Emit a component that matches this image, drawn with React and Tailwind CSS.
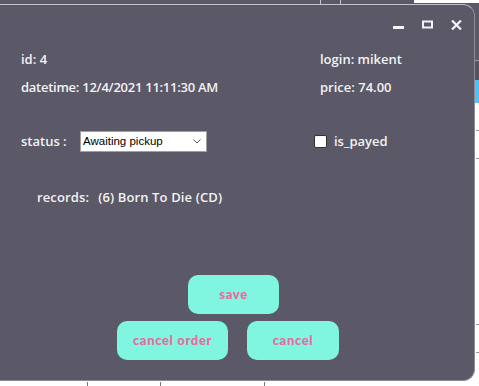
import React from 'react'

function TitleIcons() {
    return (
        <div className="flex items-center justify-end h-[40px] pr-[12px] gap-[18px]">
            <svg width="11" height="10" viewBox="0 0 11 10" className="mt-[2px]">
                <rect x="0" y="5" width="11" height="3" fill="#f4f4f6" />
            </svg>
            <svg width="11" height="10" viewBox="0 0 11 10">
                <rect x="1" y="1.5" width="9" height="6" fill="none" stroke="#f4f4f6" strokeWidth="2" />
            </svg>
            <svg width="11" height="10" viewBox="0 0 11 10">
                <path d="M1 0.5 L10 9.5 M10 0.5 L1 9.5" stroke="#f4f4f6" strokeWidth="2.2" />
            </svg>
        </div>
    )
}

function MintButton({ label, width }) {
    return (
        <button
            className={`${width} h-[39px] rounded-[10px] bg-[#80f5e0] text-[#ec6a9f] text-[13px] font-black tracking-[0.05em]`}
            style={{ fontFamily: 'Lato, "DejaVu Sans", sans-serif' }}
        >
            {label}
        </button>
    )
}

export default function App() {
    return (
        <div className="relative w-[479px] h-[386px] overflow-hidden bg-white">
            {/* parent window behind the dialog */}
            <div className="absolute left-0 top-0 w-[479px] h-[62px] bg-[#5b5867]" />
            <div className="absolute left-[414px] top-0 w-[65px] h-[3px] bg-white" />
            <div className="absolute left-[320px] top-0 w-px h-[5px] bg-[#c8c7cf]" />
            <div className="absolute left-[340px] top-0 w-px h-[5px] bg-[#c8c7cf]" />
            <div className="absolute left-[475px] top-[60px] w-[4px] h-px bg-[#9a98a4]" />
            <div className="absolute left-[475px] top-[62px] w-[4px] h-[18px] bg-[#55525f]" />
            <div className="absolute left-[475px] top-[80px] w-[4px] h-[23px] bg-[#4fc3f7]" />
            <div className="absolute left-[476px] top-[130px] w-[3px] h-px bg-[#9a9a9a]" />
            <div className="absolute left-[476px] top-[158px] w-[3px] h-px bg-[#9a9a9a]" />
            <div className="absolute left-[476px] top-[324px] w-[3px] h-px bg-[#9a9a9a]" />
            <div className="absolute left-[476px] top-[352px] w-[3px] h-px bg-[#9a9a9a]" />
            <div className="absolute left-[87px] top-[382px] w-px h-[4px] bg-[#777]" />
            <div className="absolute left-[160px] top-[382px] w-px h-[4px] bg-[#777]" />
            <div className="absolute left-[264px] top-[382px] w-px h-[4px] bg-[#777]" />

            {/* dialog */}
            <div
                className="absolute left-0 top-[4px] w-[475px] h-[377px] bg-[#5b5867] rounded-tr-[12px] rounded-br-[12px] border-t border-r border-b border-t-[#c4c3cb] border-r-[#8d8b96] border-b-[#8d8b96] text-[#f2f2f4] flex flex-col"
                style={{ fontFamily: '"Open Sans", "Noto Sans", sans-serif' }}
            >
                <TitleIcons />

                <div className="flex pl-[21px] text-[13px] font-semibold leading-[28px]">
                    <div className="w-[299px] flex flex-col">
                        <span>id: 4</span>
                        <span className="tracking-[-0.02em]">datetime: 12/4/2021 11:11:30 AM</span>
                    </div>
                    <div className="flex flex-col">
                        <span>login: mikent</span>
                        <span>price: 74.00</span>
                    </div>
                </div>

                <div className="flex items-center mt-[30px] pl-[21px] text-[13px] font-semibold h-[21px]">
                    <span className="w-[59px]">status :</span>
                    <div
                        className="w-[127px] h-[21px] bg-white border border-[#a0a0a0] flex items-center justify-between pl-[2px] pr-[5px] text-black text-[11.5px] font-normal"
                        style={{ fontFamily: '"Liberation Sans", Arial, sans-serif' }}
                    >
                        <span>Awaiting pickup</span>
                        <svg width="8" height="5" viewBox="0 0 8 5">
                            <path d="M0.5 0.5 L4 4 L7.5 0.5" fill="none" stroke="#555" strokeWidth="1" />
                        </svg>
                    </div>
                    <div className="ml-[107px] flex items-center gap-[7px]">
                        <div className="w-[13px] h-[13px] bg-white border border-[#333] rounded-[2px]" />
                        <span>is_payed</span>
                    </div>
                </div>

                <div className="mt-[35px] pl-[37px] flex gap-[9px] text-[13px] font-semibold leading-[20px] tracking-[0.01em]">
                    <span>records:</span>
                    <span>(6) Born To Die (CD)</span>
                </div>

                <div className="mt-[68px] flex flex-col items-start gap-[7px]">
                    <div className="pl-[188px]">
                        <MintButton label="save" width="w-[91px]" />
                    </div>
                    <div className="pl-[117px] flex gap-[19px]">
                        <MintButton label="cancel order" width="w-[111px]" />
                        <MintButton label="cancel" width="w-[92px]" />
                    </div>
                </div>
            </div>
        </div>
    )
}
